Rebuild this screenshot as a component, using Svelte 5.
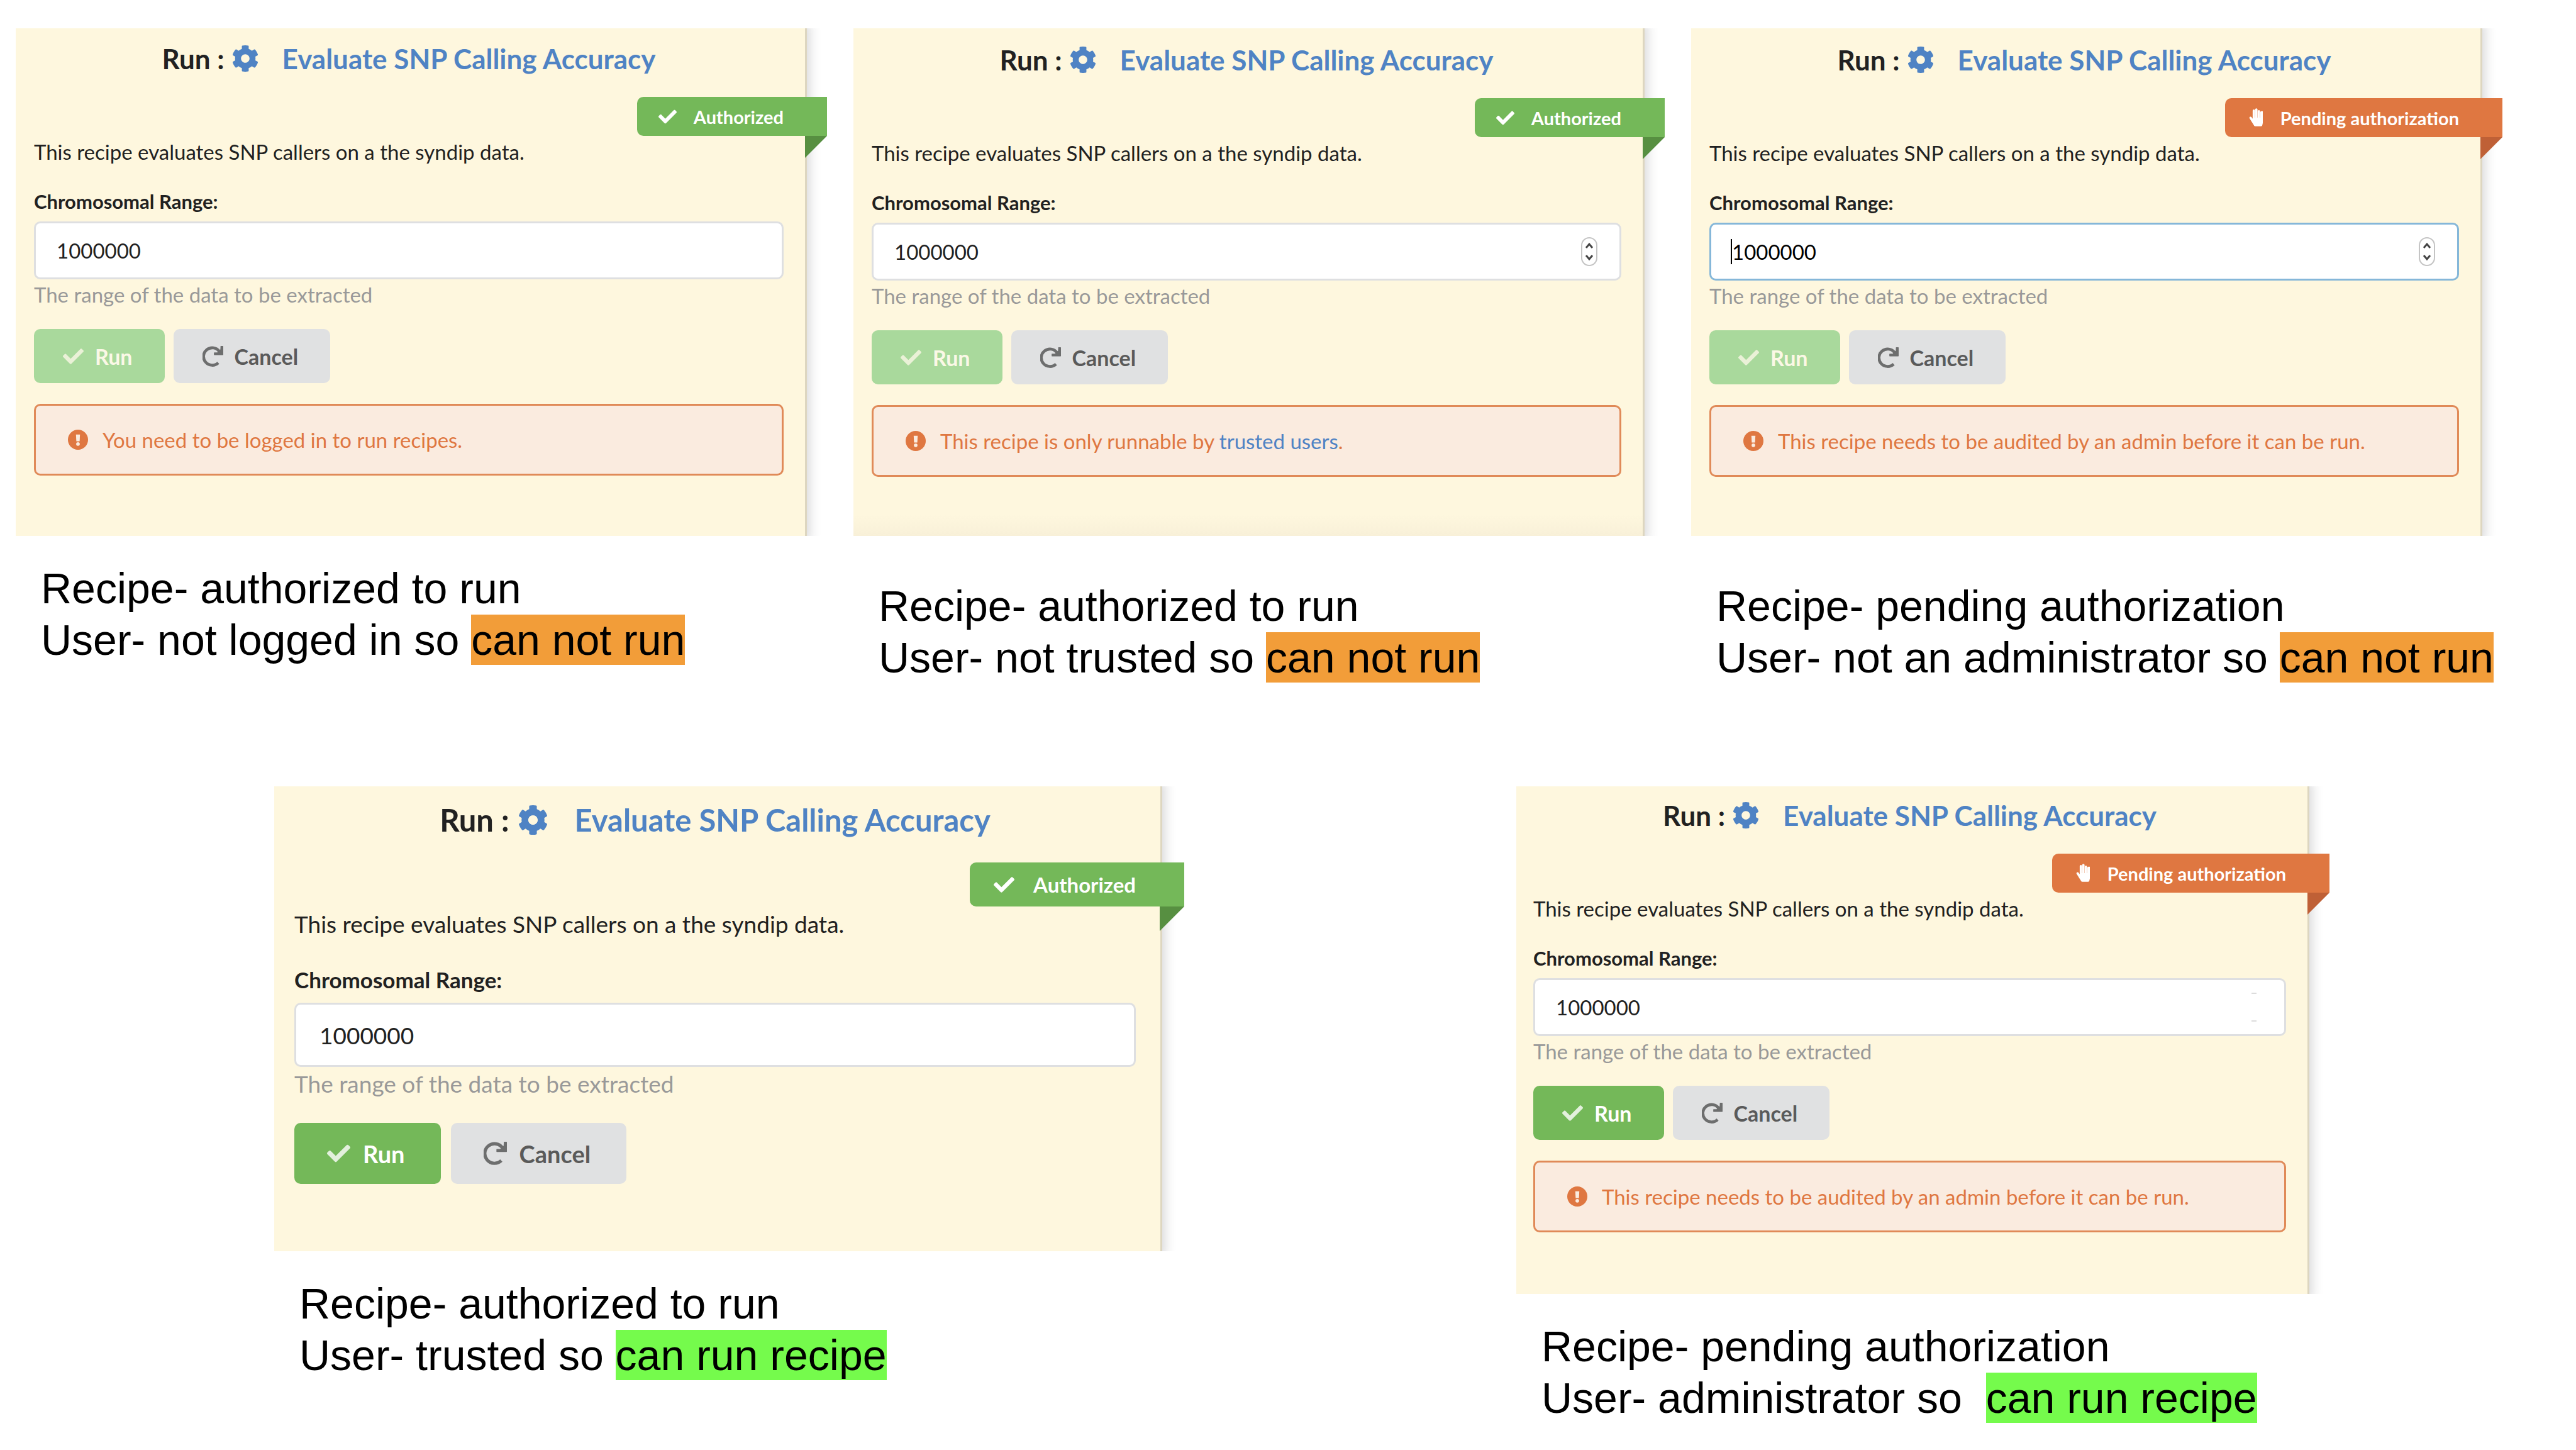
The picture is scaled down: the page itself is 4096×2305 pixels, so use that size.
<script>
  const AUTH = 'Authorized';
  const PEND = 'Pending authorization';
  const audit = 'This recipe needs to be audited by an admin before it can be run.';
  const rows = [
    {
      name: 'top',
      cards: [
        { id: 'guest', status: AUTH, disabled: true, message: 'You need to be logged in to run recipes.', lines: ['Recipe- authorized to run', 'User- not logged in so '], verdict: 'can not run' },
        { id: 'untrusted', status: AUTH, disabled: true, spinner: true, message: 'This recipe is only runnable by ', link: 'trusted users', lines: ['Recipe- authorized to run', 'User- not trusted so '], verdict: 'can not run' },
        { id: 'member', status: PEND, disabled: true, spinner: true, focused: true, message: audit, lines: ['Recipe- pending authorization', 'User- not an administrator so '], verdict: 'can not run' }
      ]
    },
    {
      name: 'bottom',
      cards: [
        { id: 'trusted', status: AUTH, large: true, lines: ['Recipe- authorized to run', 'User- trusted so '], verdict: 'can run recipe', ok: true },
        { id: 'admin', status: PEND, message: audit, lines: ['Recipe- pending authorization', 'User- administrator so  '], verdict: 'can run recipe', ok: true }
      ]
    }
  ];
</script>

{#snippet check()}
  <svg class="check" viewBox="0 0 512 512" aria-hidden="true"><path d="M173.9 439.4l-166.4-166.4c-10-10-10-26.2 0-36.2l36.2-36.2c10-10 26.2-10 36.2 0L192 312.7 432.1 72.6c10-10 26.2-10 36.2 0l36.2 36.2c10 10 10 26.2 0 36.2l-294.4 294.4c-10 10-26.2 10-36.2 0z" /></svg>
{/snippet}

<main>
  {#each rows as row}
    <div class="row {row.name}">
      {#each row.cards as c}
        <article class="item {c.id}" class:large={c.large}>
          <section class="card">
            <h2>
              <span>Run :</span>
              <svg class="gear" viewBox="8 8 496 496" aria-hidden="true"><path d="M487.4 315.7l-42.6-24.6c4.3-23.2 4.3-47 0-70.2l42.6-24.6c4.9-2.8 7.1-8.6 5.5-14-11.1-35.6-30-67.8-54.7-94.6-3.8-4.1-10-5.1-14.8-2.3L380.8 110c-17.900-15.4-38.500-27.300-60.800-35.100V25.800c0-5.600-3.900-10.500-9.400-11.700-36.700-8.200-74.300-7.800-109.200 0-5.500 1.200-9.400 6.100-9.400 11.700V75c-22.200 7.900-42.800 19.800-60.800 35.100L88.700 85.500c-4.900-2.800-11-1.900-14.800 2.300-24.700 26.700-43.600 58.900-54.700 94.600-1.700 5.400.6 11.200 5.500 14L67.300 221c-4.300 23.200-4.300 47 0 70.200l-42.600 24.600c-4.900 2.800-7.100 8.600-5.500 14 11.100 35.600 30 67.800 54.700 94.600 3.800 4.100 10 5.100 14.800 2.300l42.600-24.600c17.900 15.400 38.500 27.300 60.800 35.100v49.200c0 5.600 3.900 10.500 9.400 11.700 36.700 8.200 74.300 7.800 109.200 0 5.500-1.200 9.400-6.100 9.400-11.700v-49.200c22.200-7.900 42.800-19.800 60.800-35.100l42.600 24.600c4.900 2.800 11 1.900 14.800-2.300 24.700-26.700 43.600-58.900 54.700-94.600 1.500-5.500-.7-11.300-5.600-14.100zM256 336c-44.100 0-80-35.900-80-80s35.900-80 80-80 80 35.900 80 80-35.900 80-80 80z" /></svg>
              <a href="#recipe">Evaluate SNP Calling Accuracy</a>
            </h2>
            <div class="ribbon" class:pending={c.status === PEND}>
              {#if c.status === PEND}
                <svg class="hand" viewBox="0 0 448 512" aria-hidden="true"><path d="M408.800 79.800c-17.300.4-30.800 14.900-30.800 32.200V256h-6V80.600c0-17.300-13.500-31.800-30.800-32.200-17.900-.4-32.500 14-32.500 31.800V256h-6V32.600c0-17.300-13.500-31.800-30.800-32.200C254-.0 239.400 14.300 239.400 32.100V256h-6V65.100c0-17.300-13.500-31.800-30.800-32.200-17.900-.4-32.500 14-32.500 31.800v220.100l-31.600-43.500c-10.400-14.300-30.400-17.500-44.700-7.100-14.300 10.400-17.500 30.400-7.100 44.700l126.600 199c6 8.300 15.600 13.100 25.900 13.100h163c14.900 0 27.800-10.200 31.200-24.700l27.400-119c1.600-7 2.500-14.200 2.500-21.500V111.600c0-17.800-14.600-32.200-32.500-31.800z" /></svg>
              {:else}
                {@render check()}
              {/if}
              <span>{c.status}</span>
            </div>
            <p class="desc">This recipe evaluates SNP callers on a the syndip data.</p>
            <form onsubmit={(e) => e.preventDefault()}>
              <label for="range-{c.id}">Chromosomal Range:</label>
              <div class="field" class:focused={c.focused}>
                <input id="range-{c.id}" type="text" inputmode="numeric" value="1000000" />
                {#if c.focused}<span class="caret"></span>{/if}
                {#if c.spinner}
                  <svg class="spin" viewBox="0 0 26 46" aria-hidden="true"><rect x="1" y="1" width="24" height="44" rx="12" /><path d="M8 17l5-6 5 6M8 29l5 6 5-6" /></svg>
                {:else if c.id === 'admin'}
                  <svg class="spin faint" viewBox="0 0 26 46" aria-hidden="true"><path d="M9 1h8M9 45h8" /></svg>
                {/if}
              </div>
              <p class="help">The range of the data to be extracted</p>
              <div class="buttons">
                <button class="run" type="submit" disabled={c.disabled}>{@render check()}<span>Run</span></button>
                <button class="cancel" type="button">
                  <svg class="redo" viewBox="0 0 100 100" aria-hidden="true"><path d="M76 81A42 42 0 1 1 81 26" fill="none" stroke="currentColor" stroke-width="14" /><path d="M87 0h11q2 0 2 2v40q0 2-2 2H57q-2 0-2-2V33q0-2 2-2h14L86 17z" /></svg>
                  <span>Cancel</span>
                </button>
              </div>
            </form>
            {#if c.message}
              <div class="message">
                <svg class="alert" viewBox="0 0 32 32" aria-hidden="true"><circle cx="16" cy="16" r="16" /><path class="cut" d="M12.800 7.800h6.400l-.6 10.700h-5.200z" /><circle class="cut" cx="16" cy="22.800" r="2.900" /></svg>
                <p>{c.message}{#if c.link}<a href="#trusted">{c.link}</a>.{/if}</p>
              </div>
            {/if}
          </section>
          <p class="caption">{c.lines[0]}<br />{c.lines[1]}<mark class:ok={c.ok}>{c.verdict}</mark></p>
        </article>
      {/each}
    </div>
  {/each}
</main>

<style>
  :global(body) { background: #fff; }
  main { overflow: hidden; font-family: Lato, 'Liberation Sans', sans-serif; color: #212121; }
  h2, p { margin: 0; }
  a { color: #4f83c4; text-decoration: none; }
  svg { display: block; flex: none; fill: currentColor; }
  .row { display: grid; align-items: start; }
  .top { grid-template-columns: repeat(3, minmax(0, 1fr)); column-gap: 74px; padding: 45px 149px 0 25px; }
  .bottom { grid-template-columns: minmax(0, 1412fr) minmax(0, 1261fr); column-gap: 563px; padding: 164px 424px 0 436px; }

  .card {
    font-size: 33px;
    background: #fef7de;
    border-right: 3px solid #ddd6c0;
    padding: 22px 34px 96px 29px;
    box-shadow: -7px 0 18px 10px rgba(34, 36, 38, 0.2);
    clip-path: inset(0 -60px 0 0);
  }
  h2 { display: flex; justify-content: center; align-items: center; font-size: 44px; line-height: 52px; font-weight: 700; }
  .gear { width: 42px; height: 42px; margin: 0 38px 0 12px; color: #4f83c4; }
  .ribbon {
    position: relative; display: flex; align-items: center; width: max-content;
    height: 62px; margin: 35px -69px 0 auto; padding: 0 69px 0 34px;
    border-radius: 10px 0 0 10px; background: #74b859; color: #fff; font-size: 29px; font-weight: 700;
  }
  .ribbon::after {
    content: ''; position: absolute; right: 0; top: 100%; width: 35px; height: 35px;
    background: #578f41; clip-path: polygon(0 0, 100% 0, 0 100%);
  }
  .ribbon.pending { background: #df7741; }
  .ribbon.pending::after { background: #bf6036; }
  .ribbon .check { width: 29px; height: 29px; margin-right: 27px; }
  .hand { width: 26px; height: 30px; margin-right: 28px; }
  .desc { line-height: 48px; margin-top: 1px; }
  label { display: block; font-size: 31px; font-weight: 700; line-height: 40px; margin-top: 35px; }
  .field { position: relative; margin-top: 12px; }
  input {
    display: block; box-sizing: border-box; width: 100%; height: 92px; padding: 0 33px;
    border: 3px solid #dedfe1; border-radius: 10px; background: #fff; font: inherit; color: #212121; outline: 0;
  }
  .focused input { border-color: #85b7d9; color: #000; }
  .caret { position: absolute; left: 34px; top: 26px; width: 2px; height: 40px; background: #000; }
  .spin { position: absolute; right: 38px; top: 23px; width: 26px; height: 46px; fill: none; stroke: #444; stroke-width: 3px; }
  .spin rect { stroke: #c4c4c4; stroke-width: 2px; }
  .faint { stroke: #dcdcdc; stroke-width: 2px; }
  .help { color: #999; line-height: 48px; }
  .buttons { display: flex; gap: 14px; margin-top: 31px; }
  button {
    display: flex; align-items: center; height: 86px; border: 0; border-radius: 10px; padding: 0 51px 0 46px;
    font: inherit; font-size: 34px; font-weight: 700;
  }
  .run { background: #74b859; color: #fff; }
  .run svg { opacity: 0.8; }
  .run:disabled { background: #a9d99c; color: #fbf8e6; }
  .cancel { background: #e0e1e2; color: #5a5a5a; }
  button svg { width: 33px; height: 33px; margin-right: 18px; }
  .redo { opacity: 0.85; }
  .message {
    display: flex; align-items: center; height: 114px; box-sizing: border-box; margin-top: 33px; padding: 0 51px;
    border: 3px solid #e08a58; border-radius: 10px; background: #faebdf; color: #df7741;
  }
  .alert { width: 32px; height: 32px; margin-right: 23px; }
  .cut { fill: #faebdf; }

  .caption { font: 68px/82px 'Liberation Sans', Arial, sans-serif; color: #000; white-space: pre; padding-left: 40px; margin-top: 42px; }
  mark { background: #f29d39; color: inherit; padding: 2px 0; }
  mark.ok { background: #75fb4c; }

  .untrusted .card, .member .card { padding-top: 24px; padding-bottom: 94px; }
  .untrusted .card { background: linear-gradient(to top, #f8f0d8, #fef7de 34px); }
  .untrusted .caption, .member .caption { margin-top: 70px; }
  .admin .card { padding-top: 20px; padding-left: 27px; padding-bottom: 98px; }

  .large .card { font-size: 37px; padding: 24px 39px 107px 32px; }
  .large h2 { font-size: 49px; line-height: 58px; }
  .large .gear { width: 47px; height: 47px; margin: 0 43px 0 14px; }
  .large .ribbon { height: 70px; margin: 39px -77px 0 auto; padding: 0 77px 0 38px; font-size: 33px; }
  .large .ribbon::after { width: 39px; height: 39px; }
  .large .ribbon .check { width: 33px; height: 33px; margin-right: 30px; }
  .large .desc, .large .help { line-height: 54px; }
  .large label { font-size: 35px; line-height: 44px; margin-top: 39px; }
  .large .field { margin-top: 15px; }
  .large input { height: 102px; padding: 0 37px; }
  .large .buttons { gap: 16px; margin-top: 35px; }
  .large button { height: 97px; padding: 0 57px 0 52px; font-size: 38px; }
  .large button svg { width: 37px; height: 37px; margin-right: 20px; }
</style>
